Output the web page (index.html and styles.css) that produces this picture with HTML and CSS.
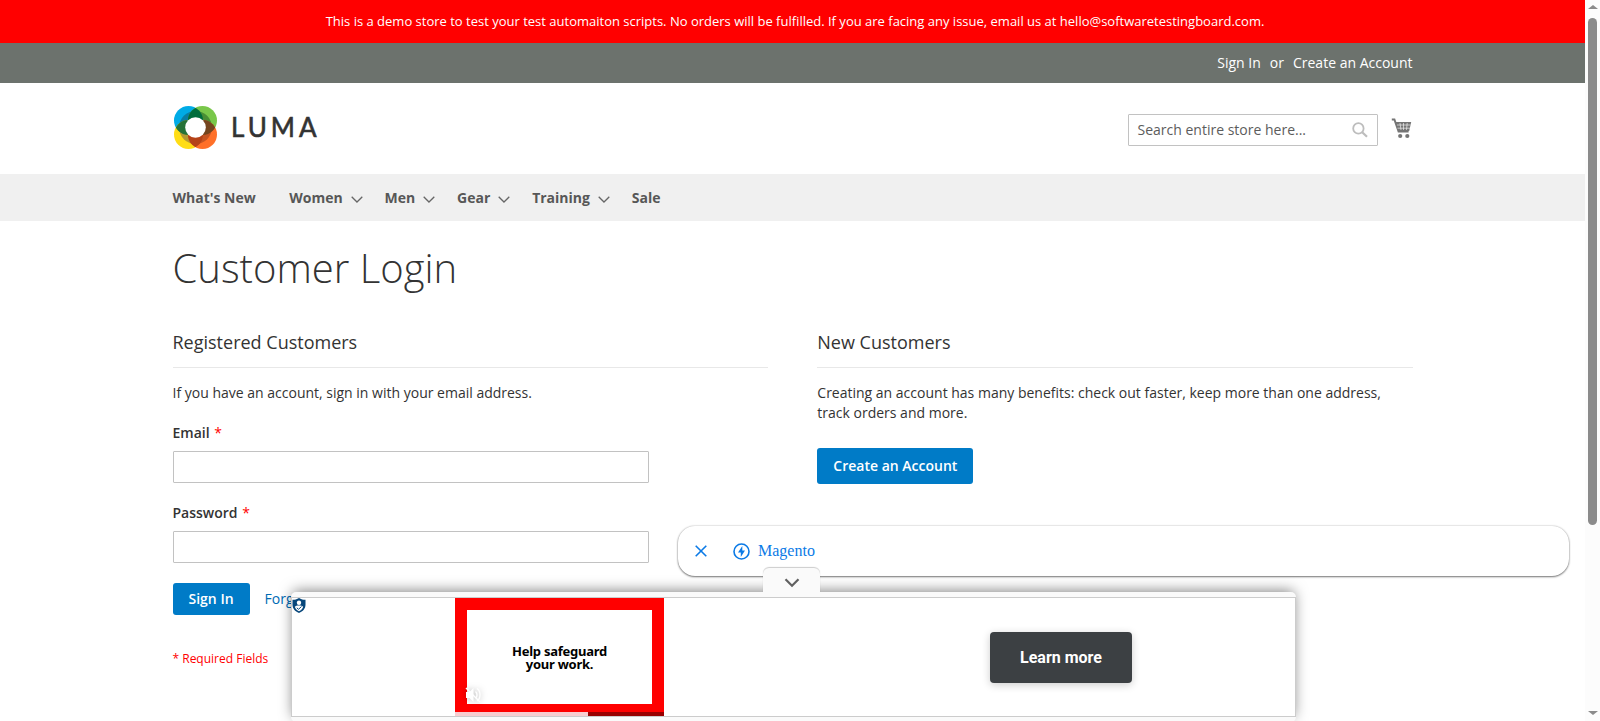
FILE: index.html
```html
<!DOCTYPE html>
<html lang="en">
<head>
<meta charset="utf-8">
<title>Customer Login</title>
<link rel="stylesheet" href="styles.css">
</head>
<body>
<div class="window">
  <div class="page">
    <div class="notice">This is a demo store to test your test automaiton scripts. No orders will be fulfilled. If you are facing any issue, email us at hello@softwaretestingboard.com.</div>
    <div class="panel"><div class="wrap panel-links"><a>Sign In</a><span>or</span><a>Create an Account</a></div></div>
    <header class="wrap header">
      <svg class="logo" width="148" height="44" viewBox="0 0 148 44">
        <defs>
          <clipPath id="tl"><circle cx="15.5" cy="15.5" r="14.5"/></clipPath>
          <clipPath id="tr"><circle cx="29.5" cy="15.5" r="14.5"/></clipPath>
          <clipPath id="bl"><circle cx="15.5" cy="29.5" r="14.5"/></clipPath>
          <clipPath id="br"><circle cx="29.5" cy="29.5" r="14.5"/></clipPath>
        </defs>
        <circle cx="15.5" cy="15.5" r="14.5" fill="#00abe6"/>
        <circle cx="29.5" cy="15.5" r="14.5" fill="#79c74a"/>
        <circle cx="15.5" cy="29.5" r="14.5" fill="#ffdd15"/>
        <circle cx="29.5" cy="29.5" r="14.5" fill="#ff7029"/>
        <g clip-path="url(#tl)"><circle cx="22.5" cy="22.5" r="16.5" fill="#087da3"/></g>
        <g clip-path="url(#tr)"><circle cx="22.5" cy="22.5" r="16.5" fill="#498e35"/></g>
        <g clip-path="url(#bl)"><circle cx="22.5" cy="22.5" r="16.5" fill="#b59a32"/></g>
        <g clip-path="url(#br)"><circle cx="22.5" cy="22.5" r="16.5" fill="#c65523"/></g>
        <g clip-path="url(#tl)"><circle cx="29.5" cy="15.5" r="14.5" fill="#006d3c"/></g>
        <g clip-path="url(#tl)"><circle cx="15.5" cy="29.5" r="14.5" fill="#267238"/></g>
        <g clip-path="url(#tr)"><circle cx="29.5" cy="29.5" r="14.5" fill="#75451f"/></g>
        <g clip-path="url(#bl)"><circle cx="29.5" cy="29.5" r="14.5" fill="#b54218"/></g>
        <circle cx="22.5" cy="22.5" r="10.3" fill="#fff"/>
        <text class="logo-text" x="58" y="31.500" textLength="85.500">LUMA</text>
      </svg>
      <div class="tools">
        <div class="search"><span>Search entire store here...</span>
          <svg width="16" height="16" viewBox="0 0 16 16" fill="none" stroke="#bdbdbd" stroke-width="1.8"><circle cx="6.4" cy="6.4" r="5.2"/><path d="M10.2 10.2l4.8 4.6" stroke-width="2.2"/></svg>
        </div>
        <svg class="cart" width="21" height="21" viewBox="0 0 21 21"><path d="M.8 1.5h2.6l4.2 12h10" fill="none" stroke="#757575" stroke-width="2"/><path d="M4.6 4h15.6l-2 9H7.6z" fill="#757575"/><path d="M6 7h13.5M6.500 10.2h12.500M9 5l1 7M12.500 5v7M16.200 5l-.7 7" stroke="#fff" stroke-width=".6"/><circle cx="9.200" cy="18" r="2.100" fill="#757575"/><circle cx="16.300" cy="18" r="2.100" fill="#757575"/></svg>
      </div>
    </header>
    <nav class="nav"><div class="wrap nav-items">
      <a class="nav-first">What's New</a>
      <a>Women<svg class="chev" width="12" height="7" viewBox="0 0 12 7"><path d="M.7.7L6 6 11.300.7"/></svg></a>
      <a>Men<svg class="chev" width="12" height="7" viewBox="0 0 12 7"><path d="M.7.7L6 6 11.300.7"/></svg></a>
      <a>Gear<svg class="chev" width="12" height="7" viewBox="0 0 12 7"><path d="M.7.7L6 6 11.300.7"/></svg></a>
      <a>Training<svg class="chev" width="12" height="7" viewBox="0 0 12 7"><path d="M.7.7L6 6 11.300.7"/></svg></a>
      <a>Sale</a>
    </div></nav>
    <main class="wrap">
      <h1>Customer Login</h1>
      <div class="columns">
        <section class="col">
          <h2>Registered Customers</h2>
          <p>If you have an account, sign in with your email address.</p>
          <label class="field"><span class="label">Email <i>*</i></span><input type="text"></label>
          <label class="field"><span class="label">Password <i>*</i></span><input type="password"></label>
          <div class="actions"><button class="btn">Sign In</button><a class="forgot">Forgot Your Password?</a></div>
          <div class="required">* Required Fields</div>
        </section>
        <section class="col">
          <h2>New Customers</h2>
          <p>Creating an account has many benefits: check out faster, keep more than one address, track orders and more.</p>
          <button class="btn create">Create an Account</button>
        </section>
      </div>
    </main>
  </div>
  <div class="scrollbar">
    <svg width="10" height="4" viewBox="0 0 10 4"><path d="M0 4L5 0l5 4z"/></svg>
    <div class="thumb"></div>
    <svg class="down" width="10" height="4" viewBox="0 0 10 4"><path d="M0 0h10L5 4z"/></svg>
  </div>

  <div class="anchor">
    <svg width="12" height="12" viewBox="0 0 12 12" fill="none" stroke="#0b7ae6" stroke-width="1.600"><path d="M.7.7l10.600 10.600M11.300.7L.7 11.300"/></svg>
    <svg class="bolt" width="17" height="17" viewBox="0 0 17 17"><circle cx="8.500" cy="8.500" r="7.500" fill="none" stroke="#0b7ae6" stroke-width="1.600"/><path d="M9.300 2.900L5 9.500h2.800v4.600L12 7.500H9.300z" fill="#0b7ae6"/></svg>
    <span>Magento</span>
  </div>

  <div class="ad">
    <div class="ad-tab"><svg width="16" height="10" viewBox="0 0 16 10"><path d="M1.500 1.200L8 7.800l6.500-6.600" fill="none" stroke="#616161" stroke-width="2.200"/></svg></div>
    <div class="ad-frame">
      <svg class="shield" width="14" height="15" viewBox="0 0 14 15"><path d="M7 0c2 1.300 4.200 1.800 6.500 1.800v5C13.500 10.500 11 13.500 7 15 3 13.500.5 10.500.5 6.800v-5C2.800 1.800 5 1.300 7 0z" fill="#07477b"/><circle cx="7" cy="4.800" r="2.200" fill="#fff"/><path d="M2.800 8.700c1-1 2-1.300 4.200-1.300s3.200.3 4.200 1.300C10.500 11 9 12.500 7 13.300 5 12.500 3.500 11 2.800 8.700z" fill="#fff"/><path d="M4.800 9.800l1.700 1.500L9.500 8.500" fill="none" stroke="#07477b"/></svg>
      <div class="video">
        <div class="slide">Help safeguard<br>your work.</div>
        <svg class="mute" width="16" height="16" viewBox="0 0 16 16"><path d="M1 5h3.500l4-4v14l-4-4H1z" fill="#fff"/><path d="M10.500 4.500c2 1.500 2 5.500 0 7M12 1.500c4 2.500 4 10 0 12.500M1 1l14 14" fill="none" stroke="#fff" stroke-width="1.400"/></svg>
        <div class="progress"><div class="played"></div></div>
      </div>
      <button class="learn">Learn more</button>
    </div>
  </div>
</div>
</body>
</html>
```

FILE: styles.css
```css
* { box-sizing: border-box; }
body { margin: 0; overflow: hidden; background: #fff; color: #333; font: 14px/20px "Open Sans", "Noto Sans", sans-serif; }
.window { position: relative; display: flex; width: 1600px; height: 721px; overflow: hidden; }
.page { width: 1585px; }
.wrap { width: 1280px; margin: 0 auto; padding: 0 20px; }
.notice { height: 43px; padding-right: 0; background: #f00; color: #fff; font-size: 13px; line-height: 43px; text-align: center; padding-left: 5px; }
.panel { height: 40px; background: #6c726d; color: #fff; }
.panel-links { display: flex; justify-content: flex-end; gap: 9px; line-height: 40px; }
.header { display: flex; justify-content: space-between; height: 91px; padding-top: 22px; }
.logo { display: block; }
.logo-text { font: 400 26px Lato, sans-serif; fill: #333; stroke: #333; stroke-width: .6px; }
.tools { display: flex; gap: 13px; padding: 9px 1px 0 0; }
.search { display: flex; align-items: center; justify-content: space-between; width: 250px; height: 32px; padding: 0 9px; border: 1px solid #c2c2c2; border-radius: 1px; color: #5c5c5c; }
.cart { margin-top: 4px; }
.nav { height: 47px; background: #f0f0f0; }
.nav-items { display: flex; gap: 22px; color: #575757; font-weight: 700; line-height: 48px; }
.nav-items a { display: flex; align-items: center; }
.nav-first { margin-right: 11.500px; }
.chev { margin: 3px 0 0 7.850px; fill: none; stroke: #666; stroke-width: 1.300; }
h1 { margin: 0; padding-top: 25px; font-size: 40px; font-weight: 300; line-height: 44px; }
.columns { display: flex; justify-content: space-between; padding-top: 40px; }
.col { width: 48%; }
h2 { height: 38px; margin: 0 0 15px; border-bottom: 1px solid #e8e8e8; font-size: 18px; font-weight: 400; line-height: 24px; }
p { margin: 0 0 20px; }
.field { display: block; margin-bottom: 20px; }
.label { display: block; height: 28px; font-weight: 600; }
.label i { margin-left: 1px; color: #f00; font-style: normal; font-weight: 400; font-size: 14px; }
input { display: block; width: 80%; height: 32px; border: 1px solid #c2c2c2; border-radius: 1px; background: #fff; }
.actions { display: flex; align-items: center; gap: 15px; }
.btn { height: 32px; padding: 0 16px 1px; border: 0; border-radius: 3px; background: #007bc7; color: #fff; font: 600 14px "Open Sans", sans-serif; }
.create { height: 36px; margin-top: 5px; }
.forgot { color: #006bb4; }
.required { padding-top: 34px; color: #f00; font-size: 12px; }
.scrollbar { display: flex; flex-direction: column; align-items: center; width: 15px; padding: 5px 0 6px; background: #fcfcfc; fill: #8b8b8b; }
.thumb { width: 9px; height: 507px; margin-top: 9px; border-radius: 5px; background: #8b8b8b; }
.down { margin-top: auto; }
.anchor { position: absolute; left: 678px; top: 526px; display: flex; align-items: center; width: 891px; height: 50px; padding: 0 17px; border-radius: 17px; background: #fff; box-shadow: 0 1px 2px 0 rgba(0,0,0,.5), 0 0 2px rgba(0,0,0,.25); color: #0b7ae6; font: 16px "Liberation Serif", serif; }
.bolt { margin: 0 8px 0 26px; }
.ad { position: absolute; left: 291px; top: 592px; width: 1005px; height: 130px; padding-top: 5px; border-radius: 5px; background: #fafafa; box-shadow: 0 -3px 14px -2px rgba(0,0,0,.5); }
.ad-tab { position: absolute; left: 472px; top: -24px; display: flex; align-items: center; justify-content: center; width: 57px; height: 25px; padding-top: 4px; border-radius: 6px 6px 0 0; background: #fafafa; box-shadow: 0 -1px 1px rgba(0,0,0,.2); }
.ad-frame { position: relative; display: flex; align-items: center; justify-content: space-between; height: 120px; padding: 0 163px; border: 1px solid #ccc; background: #fff; }
.shield { position: absolute; left: 0; top: 0; }
.video { position: relative; width: 209px; height: 118px; padding: 12px; background: #f00; }
.slide { display: flex; align-items: center; justify-content: center; height: 94px; padding-top: 1px; background: #fff; color: #000; font: 700 13px/13px "Noto Sans", sans-serif; letter-spacing: -.25px; text-align: center; }
.mute { position: absolute; left: 10px; bottom: 13px; filter: drop-shadow(0 0 3px rgba(0,0,0,.25)); }
.progress { position: absolute; left: 0; bottom: 0; width: 209px; height: 4px; background: #900; }
.played { width: 133px; height: 4px; background: #f7cdd0; }
.learn { width: 142px; height: 51px; border: 0; border-radius: 4px; background: #3c4043; color: #fff; font: 700 16px Roboto, sans-serif; box-shadow: 0 2px 8px rgba(0,0,0,.2); }
```
